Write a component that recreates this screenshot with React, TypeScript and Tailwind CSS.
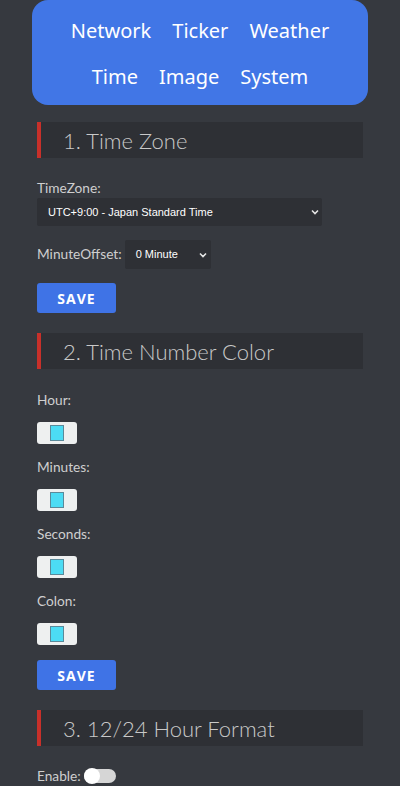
import React from "react";

function Header({ title }: { title: string }) {
  return (
    <div className="flex h-[36px] items-center border-l-[4px] border-[#c8302a] bg-[#2e3035] pl-[22px]">
      <span className="text-[22px] font-light text-[#c9c9c9] [font-family:Lato,'Open_Sans',sans-serif]">{title}</span>
    </div>
  );
}

function Chevron() {
  return (
    <svg width="8" height="6" viewBox="0 0 8 6" className="shrink-0">
      <path d="M1 1.5 L4 4.5 L7 1.5" fill="none" stroke="#e5e5e5" strokeWidth="1.6" />
    </svg>
  );
}

function Swatch() {
  return (
    <div className="flex h-[22px] w-[40px] items-center justify-center rounded-[3px] bg-[#eef0f0]">
      <div className="h-[16px] w-[14px] border border-[#5a8a9a] bg-[#4cdcf4]" />
    </div>
  );
}

function Save({ mt }: { mt: string }) {
  return (
    <div className={mt}>
      <div className="flex h-[30px] w-[79px] items-center justify-center rounded-[3px] bg-[#3f73e6] text-[14px] font-bold tracking-[1px] text-white [font-family:'Open_Sans',sans-serif]">
        SAVE
      </div>
    </div>
  );
}

export default function App() {
  const label = "text-[13.7px] text-[#cfcfcf] [font-family:Lato,sans-serif]";
  return (
    <div className="min-h-[786px] w-[400px] bg-[#36393f] pb-[20px]">
      <div className="mx-[32px] flex h-[105px] flex-col items-center justify-center rounded-b-[16px] rounded-t-[16px] bg-[#4176e6] text-[20px] text-white [font-family:'Noto_Sans',sans-serif]">
        <div className="flex h-[46px] items-center gap-[21px] pt-[2px]">
          <span>Network</span>
          <span>Ticker</span>
          <span>Weather</span>
        </div>
        <div className="flex h-[46px] items-center gap-[21px] pt-[2px]">
          <span>Time</span>
          <span>Image</span>
          <span>System</span>
        </div>
      </div>

      <div className="mx-[37px] w-[326px]">
        <div className="mt-[17px]">
          <Header title="1. Time Zone" />
        </div>
        <div className={`${label} mt-[20px] flex h-[20px] items-center`}>TimeZone:</div>
        <div className="flex h-[28px] w-[285px] items-center justify-between rounded-[2px] bg-[#2e3035] pl-[11px] pr-[3px] text-[11px] text-white [font-family:'Liberation_Sans',Arial,sans-serif]">
          <span>UTC+9:00 - Japan Standard Time</span>
          <Chevron />
        </div>
        <div className="mt-[14px] flex items-center gap-[3px]">
          <span className={label}>MinuteOffset:</span>
          <div className="flex h-[29px] w-[86px] items-center justify-between rounded-[2px] bg-[#2e3035] pl-[11px] pr-[4px] text-[11px] text-white [font-family:'Liberation_Sans',Arial,sans-serif]">
            <span>0 Minute</span>
            <Chevron />
          </div>
        </div>
        <Save mt="mt-[14px]" />

        <div className="mt-[20px]">
          <Header title="2. Time Number Color" />
        </div>
        {["Hour:", "Minutes:", "Seconds:", "Colon:"].map((t, i) => (
          <div key={t}>
            <div className={`${label} ${i === 0 ? "mt-[21px]" : "mt-[13px]"} flex h-[20px] items-center`}>{t}</div>
            <div className="mt-[12px]">
              <Swatch />
            </div>
          </div>
        ))}
        <Save mt="mt-[15px]" />

        <div className="mt-[20px]">
          <Header title="3. 12/24 Hour Format" />
        </div>
        <div className="mt-[20px] flex h-[20px] items-center gap-[3px]">
          <span className={label}>Enable:</span>
          <div className="relative h-[14px] w-[32px] rounded-full bg-[#d6d6d6]">
            <div className="absolute left-0 top-1/2 h-[16px] w-[16px] -translate-y-1/2 rounded-full bg-white" />
          </div>
        </div>
      </div>
    </div>
  );
}
